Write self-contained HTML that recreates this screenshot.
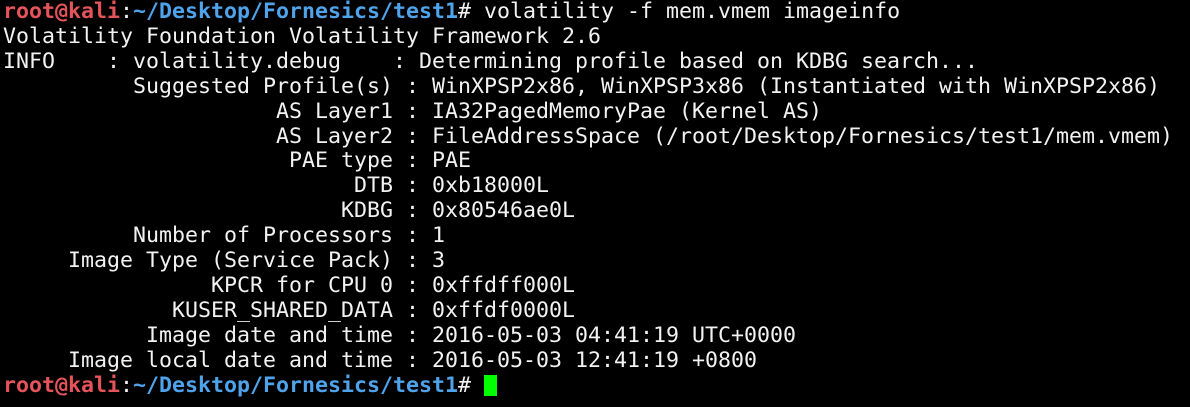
<!DOCTYPE html><html><head><style>
html,body{margin:0;background:#000;width:1190px;height:407px;overflow:hidden}
pre{margin:0;padding:0 0 0 3px;font-family:"DejaVu Sans Mono",monospace;font-size:21.6px;line-height:24.9px;color:#f2f2f2;letter-spacing:0}
.r{color:#e4545a;font-weight:bold}.b{color:#4fa3ea;font-weight:bold}
.c{display:inline-block;width:13px;height:21px;background:#00ff00;vertical-align:-4px}
</style></head><body><pre><span class="r">root@kali</span>:<span class="b">~/Desktop/Fornesics/test1</span># volatility -f mem.vmem imageinfo
Volatility Foundation Volatility Framework 2.6
INFO    : volatility.debug    : Determining profile based on KDBG search...
          Suggested Profile(s) : WinXPSP2x86, WinXPSP3x86 (Instantiated with WinXPSP2x86)
                     AS Layer1 : IA32PagedMemoryPae (Kernel AS)
                     AS Layer2 : FileAddressSpace (/root/Desktop/Fornesics/test1/mem.vmem)
                      PAE type : PAE
                           DTB : 0xb18000L
                          KDBG : 0x80546ae0L
          Number of Processors : 1
     Image Type (Service Pack) : 3
                KPCR for CPU 0 : 0xffdff000L
             KUSER_SHARED_DATA : 0xffdf0000L
           Image date and time : 2016-05-03 04:41:19 UTC+0000
     Image local date and time : 2016-05-03 12:41:19 +0800
<span class="r">root@kali</span>:<span class="b">~/Desktop/Fornesics/test1</span># <span class="c"></span></pre></body></html>
